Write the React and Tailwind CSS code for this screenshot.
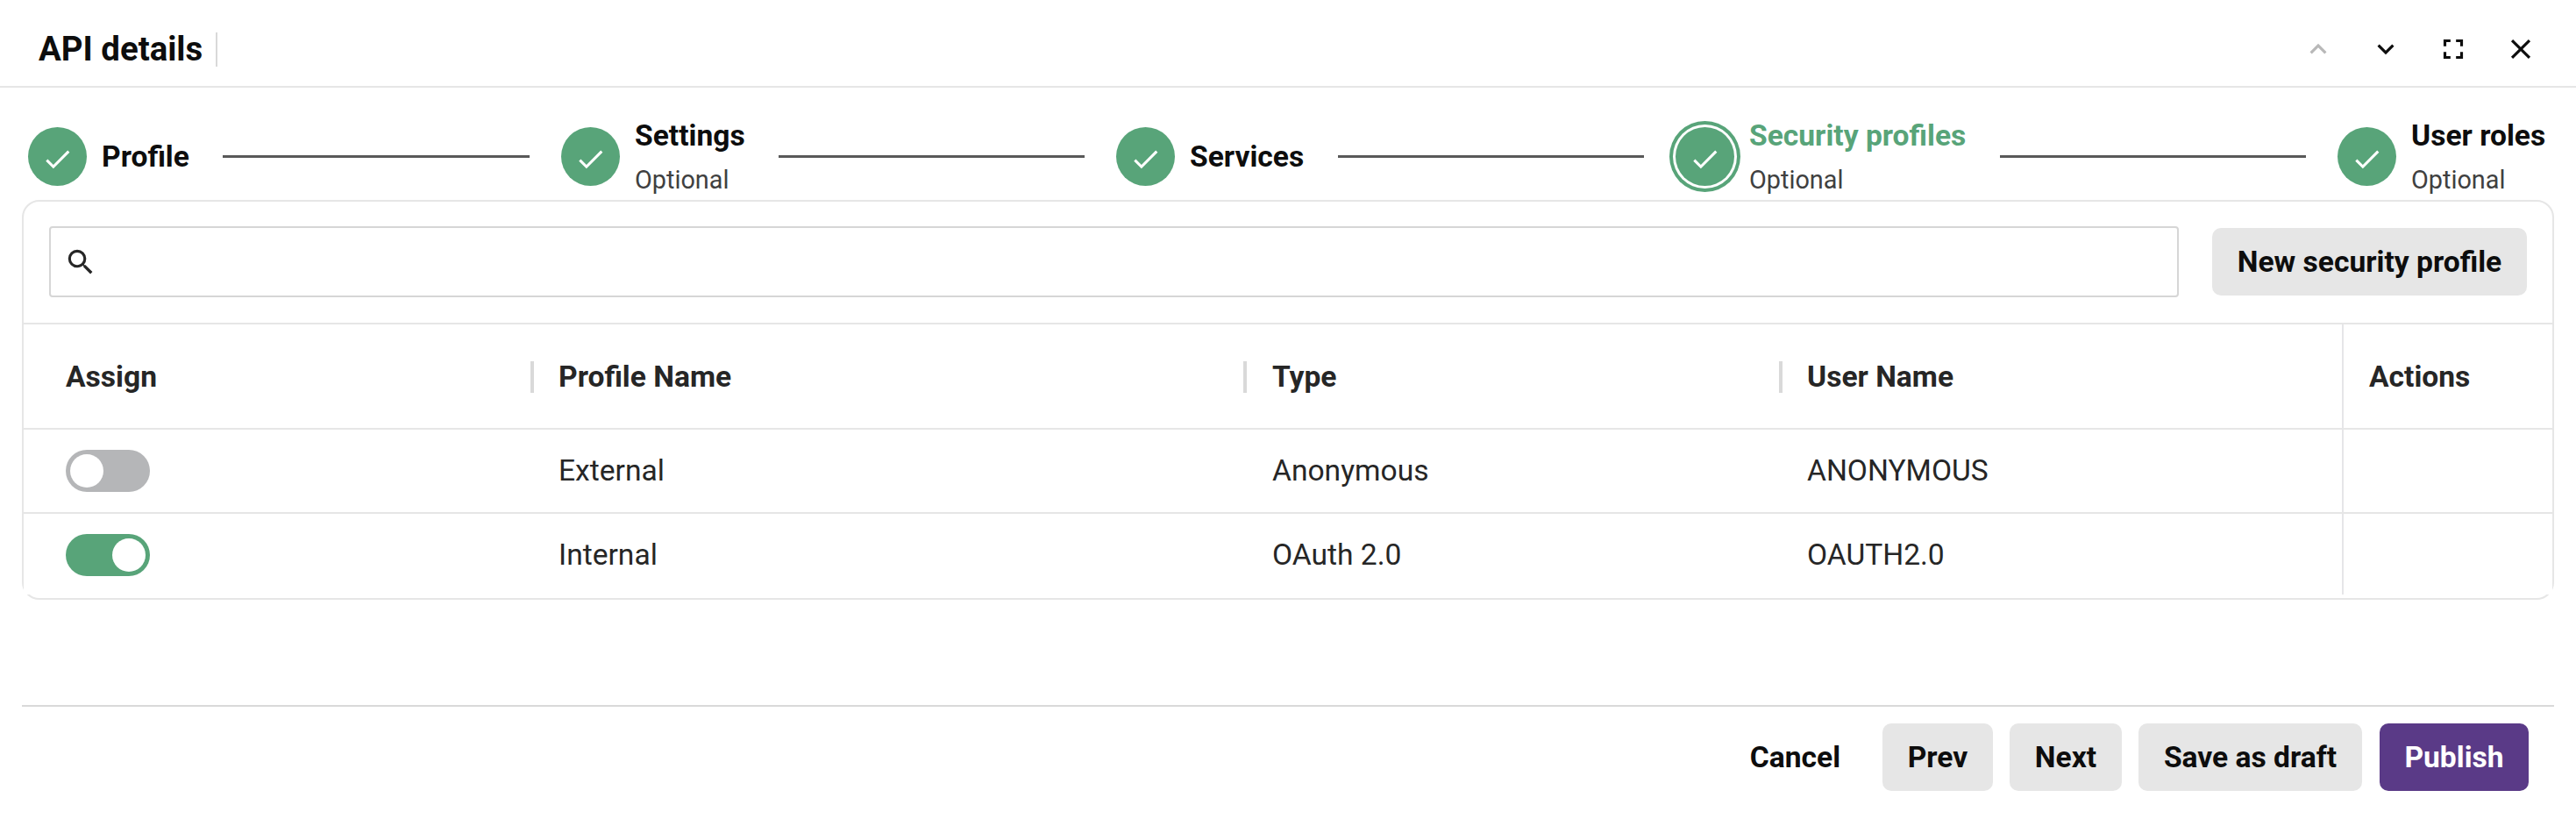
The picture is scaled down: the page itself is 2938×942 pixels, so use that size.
import { MdKeyboardArrowUp, MdKeyboardArrowDown, MdFullscreen, MdClose, MdSearch, MdCheck } from "react-icons/md";

const steps = [
  { name: "Profile", width: "w-[99px]", line: "w-[350px]" },
  { name: "Settings", optional: true, width: "w-[125px]", line: "w-[349px]" },
  { name: "Services", width: "w-[130px]", line: "w-[349px]" },
  { name: "Security profiles", optional: true, active: true, width: "w-[247px]", line: "w-[349px]" },
  { name: "User roles", optional: true, width: "w-[152px]" },
];

const rows = [
  { on: false, name: "External", type: "Anonymous", user: "ANONYMOUS" },
  { on: true, name: "Internal", type: "OAuth 2.0", user: "OAUTH2.0" },
];

function Step({ step }) {
  return (
    <div className="flex shrink-0 items-center">
      <div
        className={
          "flex size-[67px] items-center justify-center rounded-full bg-[#58a479] text-white " +
          (step.active ? "ring-4 ring-[#58a479] ring-offset-3 ring-offset-white" : "")
        }
      >
        <MdCheck className="mt-1.5 size-[37px]" />
      </div>
      <div className={"ml-[17px] whitespace-nowrap " + (step.optional ? "pt-[3px] " : "pt-px ") + step.width}>
        <div className={"text-[33.6px] leading-[50px] font-bold " + (step.active ? "text-[#58a479]" : "text-[#0d0d0d]")}>
          {step.name}
        </div>
        {step.optional && <div className="text-[28.8px] leading-[50px] text-[#404040]">Optional</div>}
      </div>
    </div>
  );
}

function Toggle({ on }) {
  return (
    <div className={"flex h-12 w-24 items-center rounded-full px-[5px] " + (on ? "justify-end bg-[#58a479]" : "bg-[#b5b6b8]")}>
      <div className="size-[38px] rounded-full bg-white" />
    </div>
  );
}

function Button({ children, className }) {
  return (
    <button className={"h-[77px] rounded-[10px] pt-0.5 text-center text-[33.6px] font-bold whitespace-nowrap " + className}>
      {children}
    </button>
  );
}

const grid = "grid grid-cols-[580px_813px_611px_640px_240px]";

export default function App() {
  return (
    <div className="flex h-[942px] w-[2938px] flex-col bg-white font-[Roboto,sans-serif] text-[#0d0d0d]">
      <header className="flex h-[100px] shrink-0 items-center justify-between border-b-2 border-[#e6e6e6] pt-[14px] pr-11 pl-11">
        <div className="flex items-center">
          <h1 className="w-[202px] text-[38.4px] leading-[46px] font-bold whitespace-nowrap">API details</h1>
          <div className="mt-px h-[39px] w-0.5 bg-[#d9d9d9]" />
        </div>
        <div className="flex gap-[39px]">
          <MdKeyboardArrowUp className="size-[38px] text-[#b8b8b8]" />
          <MdKeyboardArrowDown className="size-[38px]" />
          <MdFullscreen className="size-[38px]" />
          <MdClose className="size-[38px]" />
        </div>
      </header>

      <nav className="flex h-[128px] shrink-0 items-center pt-[29px] pl-8">
        {steps.map((s) => (
          <div key={s.name} className="flex shrink-0 items-center">
            <Step step={s} />
            {s.line && <div className={"mr-9 ml-[39px] h-[3px] bg-[#595959] " + s.line} />}
          </div>
        ))}
      </nav>

      <section className="mx-[25px] h-[456px] shrink-0 rounded-[20px] border-2 border-[#e6e6e6]">
        <div className="flex h-[140px] items-start gap-[38px] border-b-2 border-[#e6e6e6] px-[29px] pt-7">
          <div className="flex h-[81px] flex-1 items-center rounded border-2 border-[#d6d6d6] pl-[15px]">
            <MdSearch className="size-[38px] text-[#262626]" />
          </div>
          <Button className="mt-0.5 w-[359px] bg-[#e6e6e6]">New security profile</Button>
        </div>
        <div className="h-[308px] bg-white text-[33.6px] text-[#262626]">
          <div className={grid + " h-[120px] border-b-2 border-[#e6e6e6] font-bold"}>
            {["Assign", "Profile Name", "Type", "User Name"].map((h, i) => (
              <div
                key={h}
                className={"flex items-center justify-between pt-0.5 " + (i === 0 ? "pl-12" : i === 2 ? "pl-[31px]" : "pl-[30px]")}
              >
                {h}
                {i < 3 && <div className="-mr-0.5 h-9 w-1 bg-[#d9d9d9]" />}
              </div>
            ))}
            <div className="flex items-center border-l-2 border-[#e6e6e8] pt-0.5 pl-[29px]">Actions</div>
          </div>
          {rows.map((r, i) => (
            <div key={r.name} className={grid + (i === 0 ? " h-24 border-b-2 border-[#e6e6e6]" : " h-[92px]")}>
              <div className={"flex items-center pl-12 " + (i === 0 ? "" : "pt-0.5")}>
                <Toggle on={r.on} />
              </div>
              <div className={"flex items-center pl-[30px] " + (i === 0 ? "" : "pt-0.5")}>{r.name}</div>
              <div className={"flex items-center pl-[31px] " + (i === 0 ? "" : "pt-0.5")}>{r.type}</div>
              <div className={"flex items-center pl-[30px] " + (i === 0 ? "" : "pt-0.5")}>{r.user}</div>
              <div className="border-l-2 border-[#e6e6e8]" />
            </div>
          ))}
        </div>
      </section>

      <footer className="mx-[25px] mt-[120px] flex items-start justify-end border-t-2 border-[#d9d9d9] pt-[19px] pr-[29px]">
        <Button className="mr-[18px] w-[163px]">Cancel</Button>
        <Button className="mr-[19px] w-[126px] bg-[#e6e6e6]">Prev</Button>
        <Button className="mr-[19px] w-[128px] bg-[#e6e6e6]">Next</Button>
        <Button className="mr-[20px] w-[255px] bg-[#e6e6e6]">Save as draft</Button>
        <Button className="w-[170px] bg-[#5a3a87] text-white">Publish</Button>
      </footer>
    </div>
  );
}
